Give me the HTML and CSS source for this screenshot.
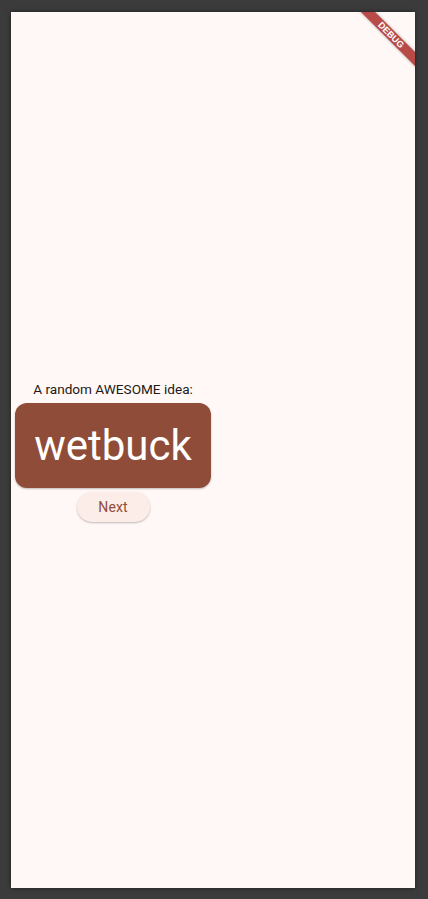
FILE: index.html
```html
<!DOCTYPE html>
<html lang="en">
<head>
<meta charset="utf-8">
<title>Namer App</title>
<link rel="stylesheet" href="styles.css">
</head>
<body>
  <div class="screen">
    <div class="column">
      <p class="label">A random AWESOME idea:</p>
      <div class="card"><span class="word">wetbuck</span></div>
      <button class="next">Next</button>
    </div>
    <div class="banner"><span>DEBUG</span></div>
  </div>
</body>
</html>
```
FILE: styles.css
```css
html, body {
  margin: 0;
  padding: 0;
  background: #3b3b3b;
}
body {
  width: 428px;
  height: 899px;
  box-sizing: border-box;
  padding: 12px 13px 11px 11px;
  font-family: Roboto, "Liberation Sans", sans-serif;
}
.screen {
  position: relative;
  width: 404px;
  height: 876px;
  background: #fff8f6;
  overflow: hidden;
  display: flex;
  align-items: center;
  box-shadow: 0 0 4px rgba(0,0,0,0.5);
}
.column {
  width: 204px;
  display: flex;
  flex-direction: column;
  align-items: center;
}
.label {
  margin: 0;
  font-size: 13.6px;
  line-height: 20px;
  color: #231917;
  letter-spacing: 0;
}
.card {
  margin: 4px;
  padding: 20px;
  width: 196px;
  height: 85px;
  box-sizing: border-box;
  background: #8f4c38;
  border-radius: 12px;
  box-shadow: 0 1px 2px rgba(0,0,0,0.25);
  display: flex;
  align-items: center;
  justify-content: center;
}
.word {
  color: #ffffff;
  font-size: 42px;
  line-height: 45px;
  white-space: nowrap;
}
.next {
  width: 73px;
  height: 30px;
  border: none;
  border-radius: 15px;
  background: #fcede8;
  color: #8f4c38;
  font-family: Roboto, "Liberation Sans", sans-serif;
  font-size: 14px;
  font-weight: 400;
  letter-spacing: 0.1px;
  box-shadow: 0 1px 2px rgba(0,0,0,0.25);
  padding: 0;
}
.banner {
  position: absolute;
  top: 18px;
  left: calc(100% - 74px);
  width: 100px;
  height: 10px;
  background: #b84a48;
  transform: rotate(45deg);
  box-shadow: 0 0 3px rgba(0,0,0,0.35);
  display: flex;
  align-items: center;
  justify-content: center;
}
.banner span {
  color: #ffffff;
  font-size: 9px;
  font-weight: 700;
  line-height: 10px;
  font-family: "Liberation Sans", sans-serif;
}
```
